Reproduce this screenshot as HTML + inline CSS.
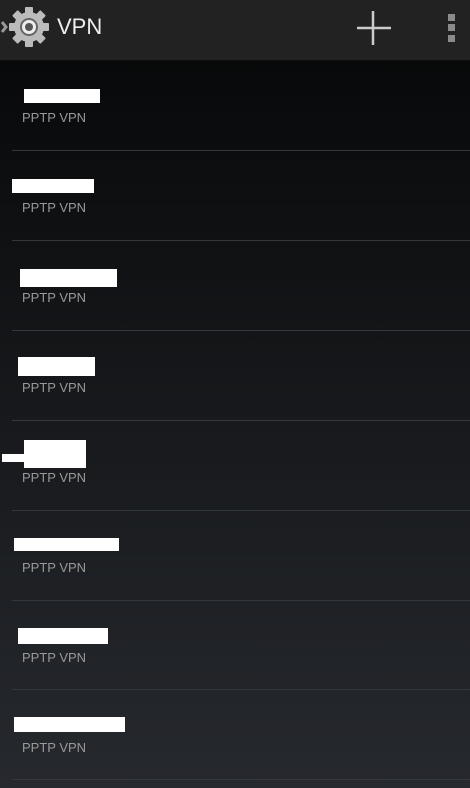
<!DOCTYPE html>
<html><head><style>
body{margin:0;width:470px;height:788px;overflow:hidden;font-family:"Liberation Sans",sans-serif;background:linear-gradient(#08090a 60px,#16181b 400px,#26292e 788px);position:relative}
.hdr{position:absolute;left:0;top:0;width:470px;height:60px;background:#222;box-shadow:0 1px 2px #111}
.t{position:absolute;left:57px;top:14px;color:#eee;font-size:22px}
.d{position:absolute;width:7px;height:7px;background:#8a8a8a;left:448px}
.l{position:absolute;left:12px;right:0;height:1px;background:#34373b}
.s{position:absolute;left:22px;color:#999;font-size:13px}
.b{position:absolute;background:#fff}
</style></head><body>
<div class="hdr">
<svg style="position:absolute;left:0;top:0" width="60" height="60">
<path d="M2 22 L6 27 L2 32" stroke="#999" stroke-width="3" fill="none"/>
<g transform="translate(29,27)" fill="#bbb">
<rect x="-4" y="-20" width="8" height="40" rx="1"/>
<rect x="-4" y="-20" width="8" height="40" rx="1" transform="rotate(45)"/>
<rect x="-4" y="-20" width="8" height="40" rx="1" transform="rotate(90)"/>
<rect x="-4" y="-20" width="8" height="40" rx="1" transform="rotate(135)"/>
<circle r="15"/>
<circle r="9" fill="#666"/>
<circle r="7" fill="#eee"/>
<circle r="4" fill="#555"/>
</g></svg>
<div class="t">VPN</div>
<svg style="position:absolute;left:355px;top:9px" width="38" height="38"><path d="M18 2V36M2 19H36" stroke="#ccc" stroke-width="2.5"/></svg>
<div class="d" style="top:14px"></div><div class="d" style="top:24px"></div><div class="d" style="top:35px"></div>
</div>
<div class="b" style="left:24px;top:89px;width:76px;height:14px"></div>
<div class="b" style="left:12px;top:179px;width:82px;height:14px"></div>
<div class="b" style="left:20px;top:269px;width:97px;height:18px"></div>
<div class="b" style="left:18px;top:357px;width:77px;height:19px"></div>
<div class="b" style="left:24px;top:440px;width:62px;height:28px"></div>
<div class="b" style="left:2px;top:454px;width:80px;height:8px"></div>
<div class="b" style="left:14px;top:538px;width:105px;height:13px"></div>
<div class="b" style="left:18px;top:628px;width:90px;height:16px"></div>
<div class="b" style="left:14px;top:717px;width:111px;height:15px"></div>
<div class="s" style="top:110px">PPTP VPN</div>
<div class="s" style="top:200px">PPTP VPN</div>
<div class="s" style="top:290px">PPTP VPN</div>
<div class="s" style="top:380px">PPTP VPN</div>
<div class="s" style="top:470px">PPTP VPN</div>
<div class="s" style="top:560px">PPTP VPN</div>
<div class="s" style="top:650px">PPTP VPN</div>
<div class="s" style="top:740px">PPTP VPN</div>
<div class="l" style="top:150px"></div><div class="l" style="top:240px"></div><div class="l" style="top:330px"></div><div class="l" style="top:420px"></div><div class="l" style="top:510px"></div><div class="l" style="top:600px"></div><div class="l" style="top:689px"></div><div class="l" style="top:779px"></div>
</body></html>
